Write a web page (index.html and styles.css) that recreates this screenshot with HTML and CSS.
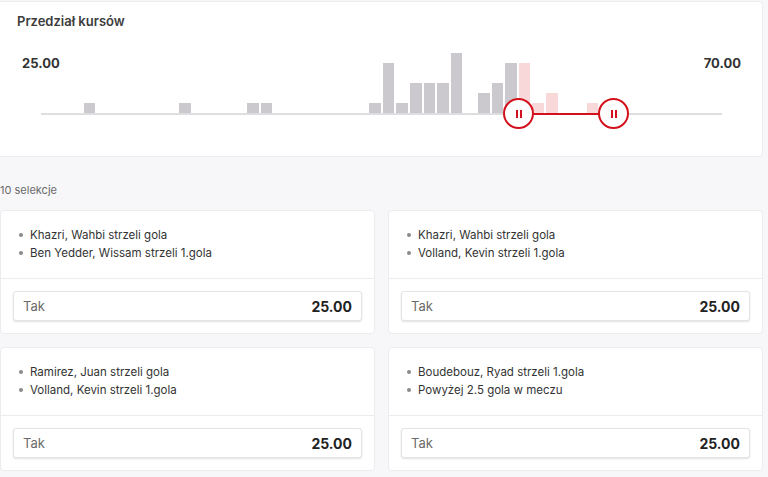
FILE: index.html
```html
<!DOCTYPE html>
<html lang="pl">
<head>
<meta charset="UTF-8" />
<title>Przedział kursów</title>
<link rel="stylesheet" href="styles.css">
</head>
<body>
<div class="page">
	<section class="range-card">
		<h2 class="range-title">Przedział kursów</h2>
		<div class="chart">
			<div class="chart-labels">
				<span>25.00</span>
				<span>70.00</span>
			</div>
			<div class="plot">
				<div class="bars">
					<i></i><i></i><i></i><i class="h1"></i><i></i><i></i><i></i><i></i><i></i><i></i>
					<i class="h1"></i><i></i><i></i><i></i><i></i><i class="h1"></i><i class="h1"></i><i></i><i></i><i></i>
					<i></i><i></i><i></i><i></i><i class="h1"></i><i class="h5"></i><i class="h1"></i><i class="h3"></i><i class="h3"></i><i class="h3"></i>
					<i class="h6"></i><i></i><i class="h2"></i><i class="h3"></i><i class="h5"></i><i class="h5 on"></i><i class="h1 on"></i><i class="h2 on"></i><i></i><i></i>
					<i class="h1 on"></i><i></i><i></i><i></i><i></i><i></i><i></i><i></i><i></i><i></i>
				</div>
				<div class="track">
					<div class="track-fill"></div>
					<span class="handle handle-min"><b></b><b></b></span>
					<span class="handle handle-max"><b></b><b></b></span>
				</div>
			</div>
		</div>
	</section>

	<p class="count">10 selekcje</p>

	<div class="combos">
		<div class="combo">
			<ul class="legs">
				<li>Khazri, Wahbi strzeli gola</li>
				<li>Ben Yedder, Wissam strzeli 1.gola</li>
			</ul>
			<div class="combo-foot">
				<button class="odd"><span>Tak</span><strong>25.00</strong></button>
			</div>
		</div>
		<div class="combo">
			<ul class="legs">
				<li>Khazri, Wahbi strzeli gola</li>
				<li>Volland, Kevin strzeli 1.gola</li>
			</ul>
			<div class="combo-foot">
				<button class="odd"><span>Tak</span><strong>25.00</strong></button>
			</div>
		</div>
		<div class="combo">
			<ul class="legs">
				<li>Ramirez, Juan strzeli gola</li>
				<li>Volland, Kevin strzeli 1.gola</li>
			</ul>
			<div class="combo-foot">
				<button class="odd"><span>Tak</span><strong>25.00</strong></button>
			</div>
		</div>
		<div class="combo">
			<ul class="legs">
				<li>Boudebouz, Ryad strzeli 1.gola</li>
				<li>Powyżej 2.5 gola w meczu</li>
			</ul>
			<div class="combo-foot">
				<button class="odd"><span>Tak</span><strong>25.00</strong></button>
			</div>
		</div>
	</div>
</div>
</body>
</html>
```

FILE: styles.css
```css
body {
	margin: 0;
	background-color: #f7f7f9;
	font-family: Inter, "Open Sans", sans-serif;
	color: #333;
}

.page {
	width: 763px;
	padding-top: 1px;
}

.range-card {
	background: #fff;
	border: 1px solid #ececef;
	border-left: 0;
	border-radius: 0 4px 4px 0;
	padding: 11px 0 41px 0;
}

.range-title {
	margin: 0 0 24px 17px;
	font-size: 13px;
	line-height: 16px;
	font-weight: 600;
	color: #3c3c3c;
}

.chart {
	display: grid;
}

.chart-labels,
.plot {
	grid-area: 1 / 1;
}

.chart-labels {
	display: flex;
	justify-content: space-between;
	align-self: start;
	margin-top: 2px;
	padding: 0 21px 0 22px;
	font-size: 13px;
	line-height: 16px;
	font-weight: 700;
	color: #333;
}

.plot {
	margin: 0 40px 0 41px;
}

.bars {
	display: flex;
	align-items: flex-end;
	height: 60px;
	margin-left: 1px;
}

.bars i {
	flex: 1;
	margin: 0 1px;
	background: #cbc9cd;
	height: 0;
}

.bars i.on {
	background: #f8d8d9;
}

.bars .h1 { height: 10px; }
.bars .h2 { height: 20px; }
.bars .h3 { height: 30px; }
.bars .h5 { height: 50px; }
.bars .h6 { height: 60px; }

.track {
	position: relative;
	height: 2px;
	background: #dedde0;
}

.track-fill {
	position: absolute;
	left: 477px;
	width: 95px;
	top: 0;
	height: 2px;
	background: #d3111c;
}

.handle {
	position: absolute;
	top: -15px;
	width: 27px;
	height: 27px;
	margin-left: -15px;
	border: 2px solid #d3111c;
	border-radius: 50%;
	background: #fff;
	display: flex;
	justify-content: center;
	align-items: center;
	gap: 2px;
}

.handle b {
	width: 2px;
	height: 8px;
	background: #d3111c;
}

.handle-min { left: 477px; }
.handle-max { left: 572px; }

.count {
	margin: 26px 0 13px 0;
	font-size: 11px;
	line-height: 14px;
	color: #6a6a6a;
}

.combos {
	display: grid;
	grid-template-columns: 1fr 1fr;
	gap: 13px;
}

.combo {
	background: #fff;
	border: 1px solid #ececef;
	border-radius: 4px;
}

.legs {
	list-style: none;
	margin: 0;
	padding: 15px 12px 16px 29px;
	font-size: 11.5px;
	line-height: 18px;
	color: #333;
	border-bottom: 1px solid #ececef;
}

.legs li {
	position: relative;
}

.legs li::before {
	content: "";
	position: absolute;
	left: -11px;
	top: 7px;
	width: 4px;
	height: 4px;
	border-radius: 50%;
	background: #8a8a8a;
}

.combo-foot {
	padding: 12px;
}

.odd {
	display: flex;
	justify-content: space-between;
	align-items: center;
	width: 100%;
	height: 30px;
	padding: 0 9px;
	background: #fff;
	border: 1px solid #e4e4e7;
	border-radius: 3px;
	box-shadow: 0 1px 2px rgba(0, 0, 0, 0.12);
	font-family: inherit;
	cursor: pointer;
}

.odd span {
	font-size: 13px;
	color: #6a6a6a;
}

.odd strong {
	font-size: 14px;
	font-weight: 700;
	color: #222;
}
```
